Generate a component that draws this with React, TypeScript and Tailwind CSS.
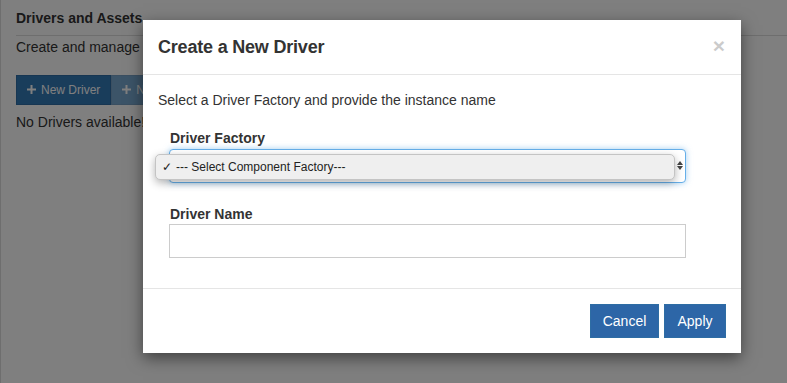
import React from 'react';

function PlusIcon() {
  return (
    <svg width="9" height="9" viewBox="0 0 9 9" className="inline-block mr-[5px] -mt-[2px]">
      <path d="M3.5 0h2v3.5H9v2H5.5V9h-2V5.5H0v-2h3.5z" fill="currentColor" />
    </svg>
  );
}

export default function App() {
  return (
    <div className="relative h-[383px] w-full overflow-hidden bg-white font-['Liberation_Sans',Arial,sans-serif] text-[14px] text-[#333]">
      {/* page behind the dialog */}
      <div className="h-full border-l border-[#dcdcdc] pl-[15px]">
        <div className="border-b border-[#ddd] pt-[8px] pb-[7px] font-bold leading-[20px]">Drivers and Assets</div>
        <p className="pt-[1px] leading-[20px]">Create and manage</p>
        <div className="mt-[18px] flex">
          <button className="h-[30px] border border-[#2e6da4] bg-[#337ab7] px-[10px] text-[12px] text-white">
            <PlusIcon />
            New Driver
          </button>
          <button className="h-[30px] w-[90px] border border-[#2e6da4] bg-[#337ab7] px-[10px] text-left text-[12px] text-white opacity-65">
            <PlusIcon />
            New
          </button>
        </div>
        <p className="mt-[7px] leading-[20px]">No Drivers available!</p>
      </div>

      <div className="absolute inset-0 bg-black/50" />

      {/* dialog */}
      <div className="absolute left-[143px] top-[20px] w-[598px] bg-white shadow-[0_5px_15px_rgba(0,0,0,0.5)]">
        <div className="flex h-[55px] items-center justify-between border-b border-[#e5e5e5] px-[15px]">
          <h4 className="text-[18px] leading-[26px] font-bold tracking-[-0.2px]">Create a New Driver</h4>
          <span className="-mt-[4px] mr-[1px] text-[21px] font-bold leading-none text-black opacity-20">×</span>
        </div>

        <div className="px-[15px] pt-[15px] pb-[15px]">
          <p className="leading-[20px]">Select a Driver Factory and provide the instance name</p>

          <div className="ml-[11px] mt-[18px] w-[517px]">
            <label className="block pl-[1px] font-bold leading-[20px]">Driver Factory</label>
            <div className="relative mt-[1px] h-[34px] rounded-[4px] border border-[#66afe9] bg-white shadow-[0_0_6px_rgba(102,175,233,0.6)]">
              <div className="absolute left-[507px] top-[11px] flex flex-col gap-[1px] text-[#444]">
                <svg width="6" height="4" viewBox="0 0 6 4"><path d="M3 0L6 4H0z" fill="currentColor" /></svg>
                <svg width="6" height="4" viewBox="0 0 6 4"><path d="M0 0h6L3 4z" fill="currentColor" /></svg>
              </div>
              {/* open native menu */}
              <div className="absolute left-[-15px] top-[4px] flex h-[26px] w-[520px] items-center rounded-[5px] border border-[#c4c4c4] bg-[#efefef] shadow-[0_3px_8px_rgba(0,0,0,0.3)] text-[12px] text-[#222]">
                <span className="ml-[6px] w-[14px] text-[12px]">✓</span>
                <span>--- Select Component Factory---</span>
              </div>
            </div>

            <label className="mt-[21px] block pl-[1px] font-bold leading-[20px]">Driver Name</label>
            <input className="block h-[34px] w-full border border-[#ccc] bg-white px-[12px] outline-none" />
          </div>
        </div>

        <div className="mt-[15px] flex justify-end gap-[5px] border-t border-[#e5e5e5] px-[15px] pt-[15px] pb-[15px]">
          <button className="h-[34px] w-[69px] border border-[#2e6da4] bg-[#2d66a7] text-[14px] text-white">Cancel</button>
          <button className="h-[34px] w-[62px] border border-[#2e6da4] bg-[#2d66a7] text-[14px] text-white">Apply</button>
        </div>
      </div>
    </div>
  );
}
